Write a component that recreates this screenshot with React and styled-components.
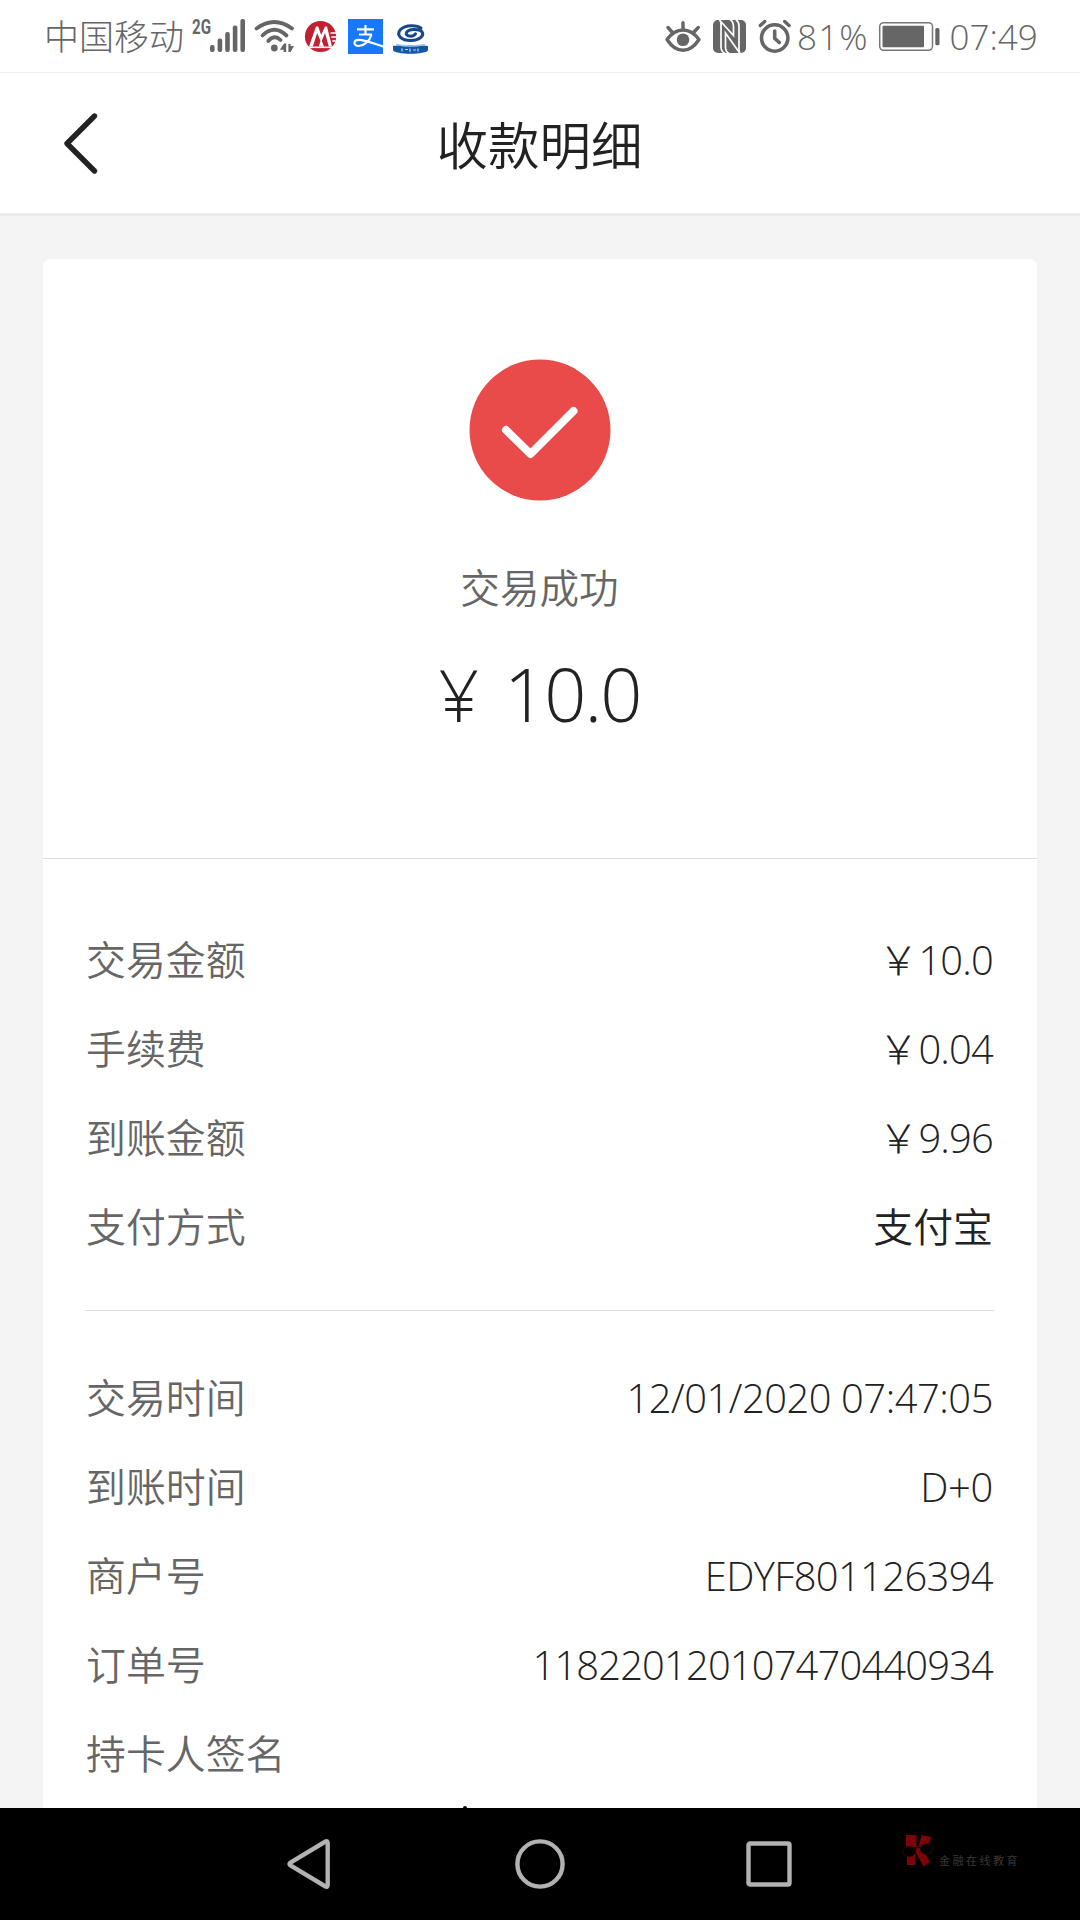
import React from "react";
import styled, { createGlobalStyle } from "styled-components";

const Global = createGlobalStyle`
  * { box-sizing: border-box; }
  body { margin: 0; background: #f4f4f4; }
`;

const Screen = styled.div`
  width: 1080px;
  height: 1920px;
  overflow: hidden;
  display: flex;
  flex-direction: column;
  background: #f4f4f4;
  color: #222;
  font-family: "Open Sans", "Noto Sans CJK SC", sans-serif;
  font-weight: 300;
`;

const StatusBar = styled.div`
  flex: none;
  height: 73px;
  display: flex;
  justify-content: space-between;
  padding: 0 40px 0 44px;
  background: #fff;
  border-bottom: 1px solid #f0f0f0;
  color: #666;
`;

const StatusGroup = styled.div`
  display: flex;
  height: 72px;
`;

const StatusText = styled.span`
  flex: none;
  width: ${(p) => p.$width}px;
  margin-right: ${(p) => p.$gap || 0}px;
  padding-top: 1px;
  padding-left: ${(p) => p.$inset || 0}px;
  font-size: 35px;
  line-height: 72px;
  letter-spacing: ${(p) => p.$spacing || 0}px;
  white-space: nowrap;
`;

const StatusIcon = styled.svg`
  flex: none;
  display: block;
  margin-right: ${(p) => p.$gap || 0}px;
`;

const NetworkType = styled.text`
  font-family: Roboto, sans-serif;
  font-weight: 700;
  font-size: 21px;
`;

const Header = styled.header`
  flex: none;
  height: 143px;
  display: grid;
  grid-template-columns: 160px 1fr 160px;
  align-items: center;
  background: #fff;
  border-bottom: 3px solid #ebebeb;
`;

const BackButton = styled.button`
  border: 0;
  background: none;
  padding: 0 0 0 60px;
  display: flex;
`;

const Title = styled.h1`
  margin: 3px 1px 0 0;
  text-align: center;
  font-size: 51.5px;
  line-height: 70px;
  font-weight: 350;
  color: #222;
`;

const Card = styled.main`
  flex: 1;
  min-height: 0;
  overflow: hidden;
  margin: 43px 43px 0;
  border-radius: 8px 8px 0 0;
  background: #fff;
`;

const Summary = styled.section`
  height: 600px;
  display: flex;
  flex-direction: column;
  align-items: center;
  padding: 100px 1px 0 0;
  border-bottom: 1px solid #dedede;
`;

const SummaryStatus = styled.div`
  margin-top: 57px;
  font-size: 39.6px;
  line-height: 60px;
  font-weight: 350;
  color: #666;
`;

const Amount = styled.div`
  display: flex;
  align-items: baseline;
  gap: 27px;
  margin-top: 26px;
  font-size: 74px;
  line-height: 100px;
  letter-spacing: -2px;
`;

const Currency = styled.span`
  font-size: 71px;
  font-weight: 350;
`;

const Section = styled.section`
  margin: 0 43px 0 42px;
  padding: ${(p) => p.$top}px 0 ${(p) => p.$bottom || 0}px 1px;
  border-bottom: ${(p) => (p.$divided ? "1px solid #dedede" : "0")};
`;

const Row = styled.div`
  display: flex;
  justify-content: space-between;
  align-items: center;
  height: 89px;
  font-size: 39.9px;
  line-height: 60px;
`;

const Label = styled.span`
  font-weight: 350;
  color: #666;
`;

const Value = styled.span`
  display: flex;
  align-items: flex-start;
  margin-right: 1px;
  letter-spacing: ${(p) => p.$spacing ?? -0.9}px;
  font-weight: ${(p) => (p.$cjk ? 350 : 300)};
  white-space: pre;
`;

const FullWidthYen = styled.span`
  margin: -2px 0 0;
  font-family: "Noto Sans CJK SC", sans-serif;
  font-weight: 300;
  letter-spacing: 0;
`;

const NavBar = styled.nav`
  flex: none;
  position: relative;
  height: 112px;
  display: flex;
  padding: 31px 0 0 287px;
  background: #000;
`;

const NavIcon = styled.svg`
  flex: none;
  display: block;
  margin-right: ${(p) => p.$gap || 0}px;
`;

const Brand = styled.div`
  position: absolute;
  left: 902px;
  top: 26px;
  display: flex;
  color: #383838;
`;

const BrandText = styled.span`
  margin: 19px 0 0 5px;
  font-size: 11px;
  font-weight: 400;
  line-height: 16px;
  letter-spacing: 2.5px;
`;

const SignatureTip = styled.i`
  position: absolute;
  left: 463px;
  top: -2px;
  width: 4px;
  height: 3px;
  border-radius: 2px 2px 0 0;
  background: #000;
`;

const payment = [
  { label: "交易金额", yen: true, value: "10.0", spacing: -0.8 },
  { label: "手续费", yen: true, value: "0.04", spacing: -0.8 },
  { label: "到账金额", yen: true, value: "9.96", spacing: -0.8 },
  { label: "支付方式", value: "支付宝", spacing: 0, cjk: true },
];

const details = [
  { label: "交易时间", value: "12/01/2020 07:47:05", spacing: -0.46 },
  { label: "到账时间", value: "D+0", spacing: -0.3 },
  { label: "商户号", value: "EDYF801126394", spacing: -0.62 },
  { label: "订单号", value: "118220120107470440934", spacing: -0.84 },
  { label: "持卡人签名", value: "" },
];

function DetailRow({ label, value, yen, spacing, cjk }) {
  return (
    <Row>
      <Label>{label}</Label>
      <Value $spacing={spacing} $cjk={cjk}>
        {yen && <FullWidthYen lang="zh-CN">￥</FullWidthYen>}
        <span>{value}</span>
      </Value>
    </Row>
  );
}

function SignalIcon() {
  return (
    <StatusIcon $gap={8} width="54" height="72" viewBox="192 0 54 72" fill="#666">
      <NetworkType x="192" y="34" textLength="19" lengthAdjust="spacingAndGlyphs">2G</NetworkType>
      <rect x="210" y="45" width="4.6" height="7" rx="2" />
      <rect x="217.6" y="38.5" width="4.6" height="13.5" rx="2" />
      <rect x="225.2" y="32" width="4.6" height="20" rx="2" />
      <rect x="232.8" y="25.5" width="4.6" height="26.5" rx="2" />
      <rect x="240.4" y="19" width="4.6" height="33" rx="2" />
    </StatusIcon>
  );
}

function WifiIcon() {
  return (
    <StatusIcon $gap={10} width="40" height="72" viewBox="254 0 40 72" fill="none">
      <g stroke="#666" strokeWidth="3.8" strokeLinecap="round">
        <path d="M256.5 28.5Q274.3 15.5 292 28.5" />
        <path d="M262.5 35.5Q274.3 24 286.5 35.5" />
        <path d="M268.3 41Q274.3 34 280.5 40" />
      </g>
      <circle cx="274.3" cy="48" r="3.4" fill="#666" />
      <path d="M279.8 49.8L284 43.5H286.2V52H283.6V49.8ZM288.4 44H290.6V46H294L290.6 52H288.4Z" fill="#666" />
    </StatusIcon>
  );
}

function MerchantsBankIcon() {
  return (
    <StatusIcon $gap={11} width="33" height="72" viewBox="304 0 33 72" fill="none">
      <circle cx="320.5" cy="36.5" r="15.6" fill="#c0202f" />
      <path
        d="M309 46.5L316 26.5H318.2L321.2 35L325 26.5H327L332 46.5H328.8L325 33L321.8 41L324 46.5H318.8L320.5 41L317.2 33L312.8 46.5Z"
        fill="#fff"
      />
      <path d="M307 47.3H333.5" stroke="#fff" strokeWidth="1.6" />
      <path d="M330.5 33H336M331.3 37H336M332.2 41H335.5" stroke="#fff" strokeWidth="1.4" />
    </StatusIcon>
  );
}

function AlipayIcon() {
  return (
    <StatusIcon $gap={9} width="35" height="72" viewBox="348 0 35 72" fill="none">
      <rect x="348" y="19" width="35" height="35" fill="#1677ff" />
      <g stroke="#fff" strokeWidth="2.2">
        <path d="M365.5 25V34.5M357 29.3H374M359 34.5H372" />
        <path d="M371.5 34.5C369.5 41.5 363.5 46 358.5 46C353.2 46 353 39.8 358.8 39.8C365 39.8 372 43 383 46.5" />
      </g>
    </StatusIcon>
  );
}

function BankAppIcon() {
  return (
    <StatusIcon width="37" height="72" viewBox="392 0 37 72" fill="none">
      <path
        d="M421 28C417 25 405.5 24.5 400.5 29.5C395.5 35.5 402 40.7 411 40.5C420 40 424.5 35.5 422 31.8C419 28.5 408 28.5 406.3 32.8C405.5 36.5 413.5 37.5 415.5 33.8"
        stroke="#17488c"
        strokeWidth="3"
        strokeLinecap="round"
      />
      <path d="M393 46C398 44.5 423 44.5 428 46V50C427 55 394 55 393 50Z" fill="#1557a6" />
      <path d="M396 44.5Q410.5 47.5 425 44.5" stroke="#9cc8ee" strokeWidth="1.4" />
      <path d="M402 48.5V51.5M405 49.5H408M410 48.5V52M413 50H416M418 48.5V51.5" stroke="#bcd9f5" strokeWidth="1.2" />
    </StatusIcon>
  );
}

function EyeIcon() {
  return (
    <StatusIcon $gap={10} width="38" height="72" viewBox="664 0 38 72" fill="none">
      <g stroke="#666" strokeWidth="3.4" strokeLinecap="round">
        <path d="M667 39.5Q674 30 683 30Q692 30 699 39.5Q692 50.3 683 50.3Q674 50.3 667 39.5Z" strokeLinejoin="round" />
        <path d="M683 29V22.8M672 32L668 27.5M694 32L698.3 27.5" />
      </g>
      <circle cx="683" cy="39.8" r="6.3" fill="#666" />
    </StatusIcon>
  );
}

function NfcIcon() {
  return (
    <StatusIcon $gap={11} width="35" height="72" viewBox="712 0 35 72" fill="none">
      <rect x="713" y="20" width="33" height="33" rx="5" fill="#666" />
      <g stroke="#fff" strokeWidth="1.7">
        <path d="M725 53.5Q721 51.5 721 47V24Q721 21 719.5 20L733.5 35.5V27Q733.5 21.5 730 19.5" />
        <path d="M736 19.5Q739 22 739 26V49Q739 52 740 53.5L725.5 33V47Q725.5 51.5 729 53.5" />
      </g>
    </StatusIcon>
  );
}

function AlarmIcon() {
  return (
    <StatusIcon $gap={4} width="34" height="72" viewBox="758 0 34 72" fill="none">
      <g stroke="#666" strokeLinecap="round">
        <circle cx="774.7" cy="38" r="13.2" strokeWidth="3.6" />
        <path d="M774.7 31V38.3L779.3 42.5" strokeWidth="3.6" strokeLinejoin="round" />
        <path d="M760.3 25.5L764.7 21.5M789 25.5L784.7 21.5" strokeWidth="3.4" />
      </g>
    </StatusIcon>
  );
}

function BatteryIcon() {
  return (
    <StatusIcon $gap={9} width="62" height="72" viewBox="878 0 62 72" fill="none">
      <rect x="879.7" y="22.7" width="52.8" height="27.6" rx="4" stroke="#777" strokeWidth="1.5" />
      <rect x="882.5" y="25.7" width="41.5" height="21.6" rx="1" fill="#666" />
      <rect x="935.3" y="28" width="4.2" height="17.3" rx="1.5" fill="#666" />
    </StatusIcon>
  );
}

export default function App() {
  return (
    <Screen>
      <Global />
      <StatusBar>
        <StatusGroup>
          <StatusText $width={140} $gap={8}>中国移动</StatusText>
          <SignalIcon />
          <WifiIcon />
          <MerchantsBankIcon />
          <AlipayIcon />
          <BankAppIcon />
        </StatusGroup>
        <StatusGroup>
          <EyeIcon />
          <NfcIcon />
          <AlarmIcon />
          <StatusText $width={82} $inset={1} $spacing={1.2}>81%</StatusText>
          <BatteryIcon />
          <StatusText $width={91} $inset={0.5}>07:49</StatusText>
        </StatusGroup>
      </StatusBar>
      <Header>
        <BackButton aria-label="返回">
          <svg width="44" height="64" viewBox="0 0 44 64" fill="none">
            <path d="M34.5 5L7 32.5L34.5 60" stroke="#222" strokeWidth="5.4" strokeLinecap="round" strokeLinejoin="round" />
          </svg>
        </BackButton>
        <Title>收款明细</Title>
      </Header>
      <Card>
        <Summary>
          <svg width="142" height="142" viewBox="0 0 142 142" fill="none">
            <circle cx="71" cy="71" r="70.5" fill="#e94b4b" />
            <path d="M37 71L61.5 95L104.5 52" stroke="#fff" strokeWidth="8" strokeLinecap="round" strokeLinejoin="round" />
          </svg>
          <SummaryStatus>交易成功</SummaryStatus>
          <Amount>
            <Currency>¥</Currency>
            <span>10.0</span>
          </Amount>
        </Summary>
        <Section $top={56} $bottom={39} $divided>
          {payment.map((row) => <DetailRow key={row.label} {...row} />)}
        </Section>
        <Section $top={42}>
          {details.map((row) => <DetailRow key={row.label} {...row} />)}
        </Section>
      </Card>
      <NavBar>
        <SignatureTip />
        <NavIcon $gap={185} width="43" height="50" viewBox="0 0 43 50" fill="none">
          <path d="M38.5 2.5Q40.7 1.5 40.7 4V46Q40.7 48.5 38.5 47.5L3.5 26.5Q1.5 25 3.5 23.5Z" stroke="#b2b2b2" strokeWidth="4.4" />
        </NavIcon>
        <NavIcon $gap={181} width="50" height="50" viewBox="0 0 50 50" fill="none">
          <circle cx="25" cy="25" r="22.6" stroke="#b2b2b2" strokeWidth="4.4" />
        </NavIcon>
        <NavIcon width="46" height="50" viewBox="0 0 46 50" fill="none">
          <rect x="2.5" y="4.5" width="41" height="41" rx="1.5" stroke="#b2b2b2" strokeWidth="4.4" />
        </NavIcon>
        <Brand>
          <svg width="32" height="34" viewBox="0 0 32 34" fill="none">
            <path d="M4 1H14.5V13H4ZM19.5 1L29.5 3L25 13H16.5ZM5 20H13.5V31H5ZM14.5 14H20L28 28L21.5 32.5L13.5 18Z" fill="#7d0309" />
            <ellipse cx="7" cy="17.5" rx="6.3" ry="5.2" fill="#050000" stroke="#2b0a0a" strokeWidth="0.8" />
            <ellipse cx="24.5" cy="15" rx="6.3" ry="5.2" fill="#050000" stroke="#2b0a0a" strokeWidth="0.8" />
          </svg>
          <BrandText>金融在线教育</BrandText>
        </Brand>
      </NavBar>
    </Screen>
  );
}
